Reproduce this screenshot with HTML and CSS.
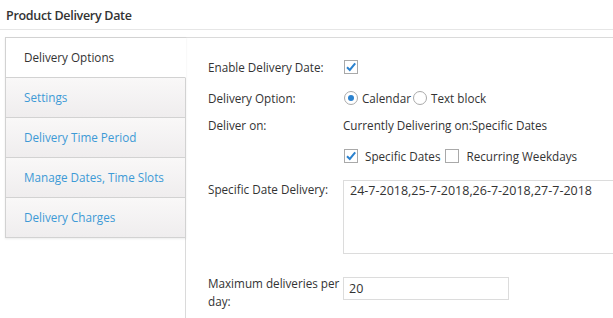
FILE: index.html
```html
<!DOCTYPE html>
<html>
<head>
<meta charset="utf-8">
<link rel="stylesheet" href="styles.css">
</head>
<body>
<h1 class="title">Product Delivery Date</h1>
<div class="tabs-wrap">
  <ul class="tabs">
    <li class="tab active">Delivery Options</li>
    <li class="tab">Settings</li>
    <li class="tab">Delivery Time Period</li>
    <li class="tab">Manage Dates, Time Slots</li>
    <li class="tab">Delivery Charges</li>
  </ul>
  <div class="panel">
    <div class="row r1">
      <div class="label">Enable Delivery Date:</div>
      <div class="value">
        <span class="cb checked"><svg viewBox="0 0 14 14" width="14" height="14"><path d="M3 7.2 L5.8 10 L11.2 3.4" fill="none" stroke="#2b82cf" stroke-width="2"/></svg></span>
      </div>
    </div>
    <div class="row r2">
      <div class="label">Delivery Option:</div>
      <div class="value">
        <span class="radio on"></span><span class="opt">Calendar</span>
        <span class="radio"></span><span class="opt">Text block</span>
      </div>
    </div>
    <div class="row r3">
      <div class="label">Deliver on:</div>
      <div class="value">Currently Delivering on:Specific Dates</div>
    </div>
    <div class="row r4">
      <div class="label"></div>
      <div class="value">
        <span class="cb checked"><svg viewBox="0 0 14 14" width="14" height="14"><path d="M3 7.2 L5.8 10 L11.2 3.4" fill="none" stroke="#2b82cf" stroke-width="2"/></svg></span><span class="cbl">Specific Dates</span>
        <span class="cb"></span><span class="cbl">Recurring Weekdays</span>
      </div>
    </div>
    <div class="row r5">
      <div class="label">Specific Date Delivery:</div>
      <div class="value"><div class="textarea">24-7-2018,25-7-2018,26-7-2018,27-7-2018</div></div>
    </div>
    <div class="row r6">
      <div class="label">Maximum deliveries per day:</div>
      <div class="value"><div class="input">20</div></div>
    </div>
  </div>
</div>
</body>
</html>
```
FILE: styles.css
```css
* { box-sizing: border-box; }
html, body { margin: 0; padding: 0; background: #fff; overflow: hidden; }
body { font-family: "Open Sans", "DejaVu Sans", sans-serif; font-size: 11.7px; color: #333; width: 613px; height: 318px; }
.title {
  margin: 0; height: 30px; padding: 0 0 0 6px;
  font-size: 12.5px; font-weight: 600; letter-spacing: -0.3px; line-height: 32px; color: #333;
  border-bottom: 1px solid #e6e6e6;
}
.tabs-wrap { display: flex; margin-top: 7px; padding-left: 5px; height: 281px; }
.tabs {
  list-style: none; margin: 0; padding: 0; width: 181px; flex: none;
  border-left: 1px solid #d2d2d2; border-top: 1px solid #d2d2d2;
  position: relative; z-index: 1; align-self: flex-start;
  box-shadow: 0 1px 2px rgba(0,0,0,0.08);
}
.tab {
  height: 40px; line-height: 39px; padding-left: 18px;
  color: #3d9ad6; font-size: 11.7px;
  background: linear-gradient(#f9f8f8, #efedee);
  border-bottom: 1px solid #d2d2d2; border-right: 1px solid #d2d2d2;
}
.tab.active { background: #fff; color: #333; border-right-color: #fff; }
.panel {
  flex: 1; margin-left: -1px; border-left: 1px solid #dadada; border-top: 1px solid #dadada;
  padding: 17px 0 0 22px;
}
.row { display: flex; align-items: center; height: 24px; }
.label { width: 135px; flex: none; }
.value { display: flex; align-items: center; white-space: nowrap; }
.r2 { margin-top: 7px; }
.r3 { margin-top: 3px; }
.r4 { margin-top: 7px; }
.r5 { margin-top: 12px; height: auto; align-items: flex-start; }
.r5 .label { line-height: 18px; }
.r6 { margin-top: 20px; height: auto; align-items: flex-start; }
.r6 .label { line-height: 18px; width: 135px; padding-right: 0; }
.cb {
  display: inline-block; width: 14px; height: 14px; border: 1px solid #a9a9a9;
  background: #fff; margin-left: 1px; position: relative;
}
.cb svg { position: absolute; left: -1px; top: -1px; }
.cbl { margin-left: 7px; margin-right: 4px; }
.radio {
  display: inline-block; width: 14px; height: 14px; border-radius: 50%;
  border: 1px solid #a9a9a9; background: #fff; margin-left: 1px; position: relative;
}
.radio.on::after {
  content: ""; position: absolute; left: 3px; top: 3px; width: 6px; height: 6px;
  border-radius: 50%; background: #2b82cf;
}
.opt { margin-left: 4px; margin-right: 1px; }
.textarea {
  width: 300px; height: 74px; border: 1px solid #dcdcdc;
  padding: 0 0 0 6px; font-size: 12.5px; line-height: 18px; padding-top: 1px;
}
.input {
  width: 166px; height: 23px; border: 1px solid #dcdcdc; margin-top: 3px;
  padding: 0 0 0 5px; font-size: 12.5px; line-height: 21px;
}
```
